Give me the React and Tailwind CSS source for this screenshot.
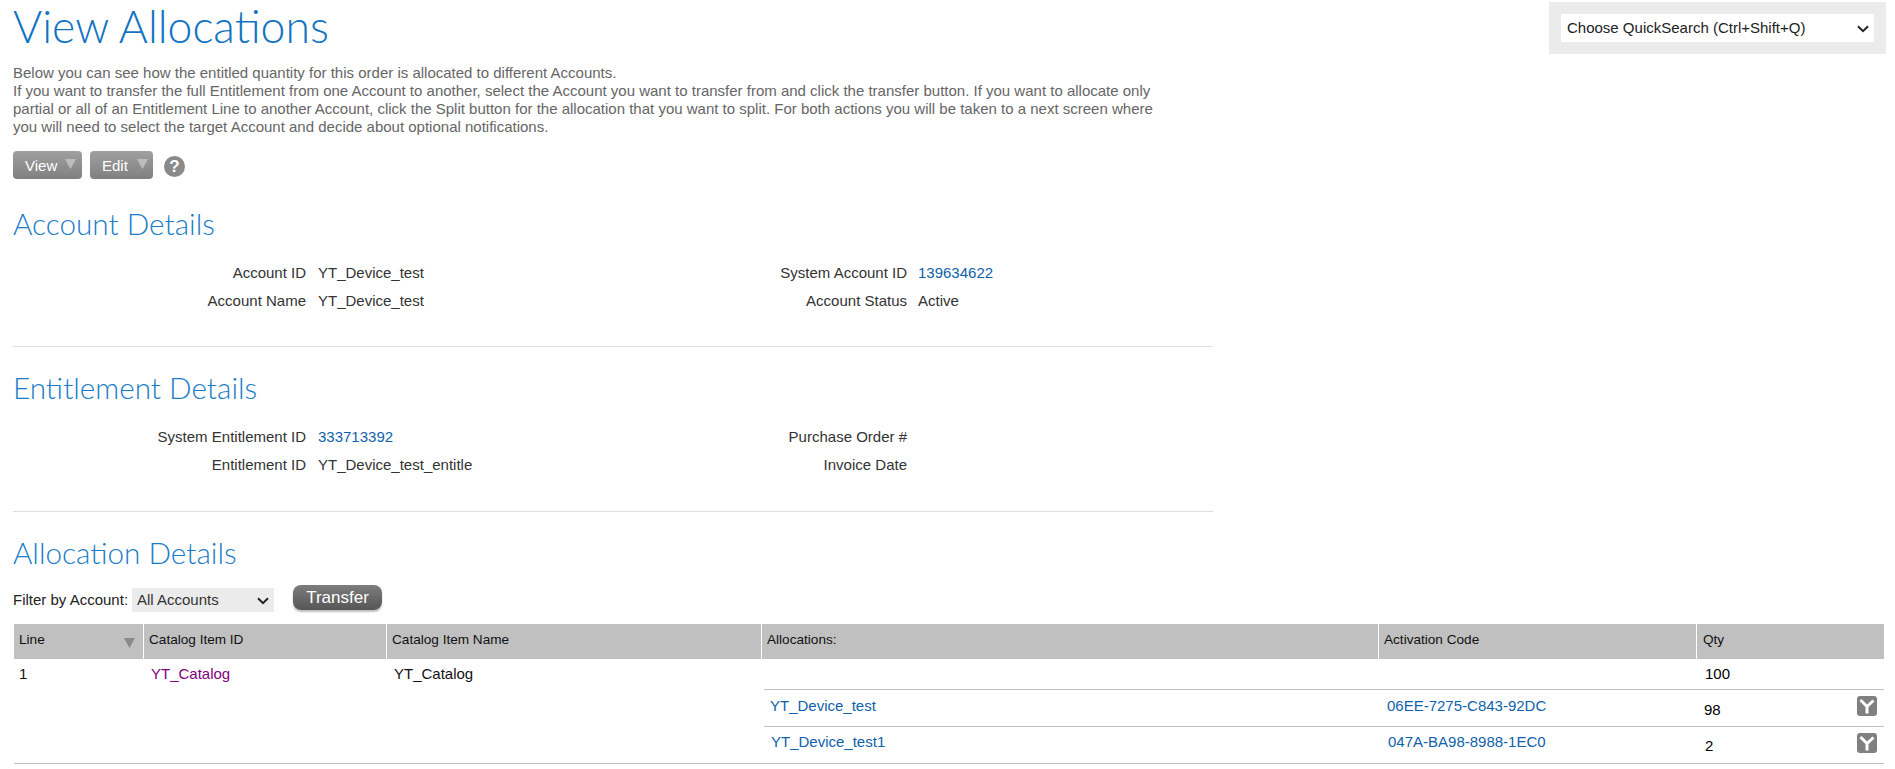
import React from "react";

const arial = "font-['Liberation_Sans',Arial,sans-serif]";

function Caret({ className }) {
  return (
    <svg width="11" height="10" viewBox="0 0 11 10" className={className} aria-hidden="true">
      <path d="M0 0H11L5.5 10Z" fill="currentColor" />
    </svg>
  );
}

function Chevron({ className }) {
  return (
    <svg width="12" height="8" viewBox="0 0 12 8" className={`absolute pointer-events-none ${className}`} aria-hidden="true">
      <path d="M1 1.2L6 6.2L11 1.2" fill="none" stroke="#222" strokeWidth="2" />
    </svg>
  );
}

function MenuButton({ label, width, pad, gap }) {
  return (
    <button className={`${width} ${pad} ${gap} h-7 pt-0.5 rounded-[4px] bg-gradient-to-b from-[#a0a0a0] to-[#808080] text-white text-[15px] flex items-center`}>
      <span>{label}</span>
      <Caret className="text-[#bdbdbd] -mt-1" />
    </button>
  );
}

function Heading({ children, className }) {
  return (
    <h2 className={`font-['Lato',sans-serif] font-light text-[29.7px] leading-9 text-[#1a7cc8] ${className}`}>{children}</h2>
  );
}

function DetailRow({ l1, v1, l2, v2, link1, link2 }) {
  const link = "text-[#0f62ac]";
  return (
    <div className="flex h-7 items-center text-[15px] text-[#333]">
      <div className="w-[293px] text-right">{l1}</div>
      <div className={`w-[289px] pl-3 ${link1 ? link : ""}`}>{v1}</div>
      <div className="w-[312px] text-right">{l2}</div>
      <div className={`pl-[11px] ${link2 ? link : ""}`}>{v2}</div>
    </div>
  );
}

function SplitIcon() {
  return (
    <svg width="20" height="20" viewBox="0 0 20 20" aria-label="Split">
      <rect width="20" height="20" rx="3" fill="#808080" />
      <path d="M3.5 4L10 10.5L16.5 4.5M10 10.5V17.5" fill="none" stroke="#fff" strokeWidth="3" />
    </svg>
  );
}

function HeaderCell({ children, className }) {
  return <div className={`h-full flex items-center pl-[5px] pb-0.5 border-r border-white ${className}`}>{children}</div>;
}

function AllocationRow({ name, code, qty, nameX, codeX, textTop, qtyTop, qtyX, height, border }) {
  return (
    <div className={`flex ${height} leading-[18px] ${border ? "border-b border-[#c0c0c0]" : ""}`}>
      <div className={`w-[615px] ${nameX} ${textTop} text-[#0f62ac]`}>{name}</div>
      <div className={`w-[318px] ${codeX} ${textTop} text-[#0f62ac]`}>{code}</div>
      <div className="flex-1 flex justify-between pr-[7px]">
        <span className={`${qtyTop} ${qtyX} text-black`}>{qty}</span>
        <span className="pt-1.5">
          <SplitIcon />
        </span>
      </div>
    </div>
  );
}

export default function App() {
  return (
    <div className={`${arial} pl-[13px] pr-[9px] bg-white min-h-[769px] text-[15px]`}>
      <div className="flex justify-between h-16">
        <h1 className="font-['Lato',sans-serif] font-light text-[44.5px] leading-[52px] text-[#1173c2]">View Allocations</h1>
        <div className="mt-0.5 h-[52px] w-[337px] bg-[#ebebeb] flex items-center justify-center">
          <div className="relative">
            <select className="block appearance-none w-[313px] h-7 bg-white text-[15px] text-[#222] pl-1.5 border-0 outline-none">
              <option>Choose QuickSearch (Ctrl+Shift+Q)</option>
            </select>
            <Chevron className="right-[5px] top-[11px]" />
          </div>
        </div>
      </div>

      <p className="w-[1150px] text-[15px] leading-[18px] text-[#666]">
        Below you can see how the entitled quantity for this order is allocated to different Accounts.
        <br />
        If you want to transfer the full Entitlement from one Account to another, select the Account you want to transfer from and click the transfer button. If you want to allocate only partial or all of an Entitlement Line to another Account, click the Split button for the allocation that you want to split. For both actions you will be taken to a next screen where you will need to select the target Account and decide about optional notifications.
      </p>

      <div className="flex items-center gap-2 mt-[15px]">
        <MenuButton label="View" width="w-[69px]" pad="pl-3" gap="gap-2" />
        <MenuButton label="Edit" width="w-[63px]" pad="pl-3" gap="gap-[9px]" />
        <span className="ml-[3px] mt-[3px] w-[21px] h-[21px] rounded-full bg-[#8a8a8a] text-white text-[17px] font-bold flex items-center justify-center">?</span>
      </div>

      <div className="w-[1200px]">
        <Heading className="mt-[27px] mb-[17px]">Account Details</Heading>
        <DetailRow l1="Account ID" v1="YT_Device_test" l2="System Account ID" v2="139634622" link2 />
        <DetailRow l1="Account Name" v1="YT_Device_test" l2="Account Status" v2="Active" />
        <hr className="mt-[31px] border-0 border-t border-[#dddddd]" />
        <Heading className="mt-[23px] mb-[17px]">Entitlement Details</Heading>
        <DetailRow l1="System Entitlement ID" v1="333713392" l2="Purchase Order #" v2="" link1 />
        <DetailRow l1="Entitlement ID" v1="YT_Device_test_entitle" l2="Invoice Date" v2="" />
        <hr className="mt-8 border-0 border-t border-[#dddddd]" />
        <Heading className="mt-[23px]">Allocation Details</Heading>
      </div>

      <div className="flex items-start mt-3.5 h-[27px]">
        <label className="w-[119px] mt-1 text-[15px] text-[#222]">Filter by Account:</label>
        <div className="relative mt-[3px]">
          <select className="block appearance-none w-[142px] h-6 bg-[#ebebeb] text-[15px] text-[#333] pl-[5px] border-0 outline-none">
            <option>All Accounts</option>
          </select>
          <Chevron className="right-[5px] top-[9px]" />
        </div>
        <button className="ml-[19px] w-[89px] h-[25px] rounded-lg bg-gradient-to-b from-[#7d7d7d] to-[#565656] text-white text-[17px] shadow-[0_2px_2px_rgba(0,0,0,0.25)]">Transfer</button>
      </div>

      <div className="mt-3 w-[1871px] text-[#111]">
        <div className="flex h-[35px] bg-[#c0c0c0] text-[13.6px] text-[#111] ml-px">
          <HeaderCell className="w-[130px] justify-between pr-2">
            <span>Line</span>
            <Caret className="text-[#8a8a8a] mt-1" />
          </HeaderCell>
          <HeaderCell className="w-[243px]">Catalog Item ID</HeaderCell>
          <HeaderCell className="w-[375px]">Catalog Item Name</HeaderCell>
          <HeaderCell className="w-[617px]">Allocations:</HeaderCell>
          <HeaderCell className="w-[318px]">Activation Code</HeaderCell>
          <div className="flex-1 flex items-center pl-[6px] pb-0.5">Qty</div>
        </div>
        <div className="flex border-b border-[#c0c0c0] ml-px">
          <div className="w-[130px] pl-[5px] pt-[6px] leading-[18px]">1</div>
          <div className="w-[243px] pl-[7px] pt-[6px] leading-[18px] text-[#800080]">YT_Catalog</div>
          <div className="w-[377px] pl-[7px] pt-[6px] leading-[18px]">YT_Catalog</div>
          <div className="flex-1">
            <div className="flex h-[31px] border-b border-[#c0c0c0]">
              <div className="w-[933px]" />
              <div className="flex-1 pl-2 pt-[6px] leading-[18px] text-black">100</div>
            </div>
            <AllocationRow name="YT_Device_test" code="06EE-7275-C843-92DC" qty="98" nameX="pl-[6px]" codeX="pl-2" textTop="pt-[7px]" qtyTop="pt-[11px]" qtyX="pl-[7px]" height="h-[37px]" border />
            <AllocationRow name="YT_Device_test1" code="047A-BA98-8988-1EC0" qty="2" nameX="pl-[7px]" codeX="pl-[9px]" textTop="pt-1.5" qtyTop="pt-2.5" qtyX="pl-2" height="h-9" />
          </div>
        </div>
      </div>
    </div>
  );
}
